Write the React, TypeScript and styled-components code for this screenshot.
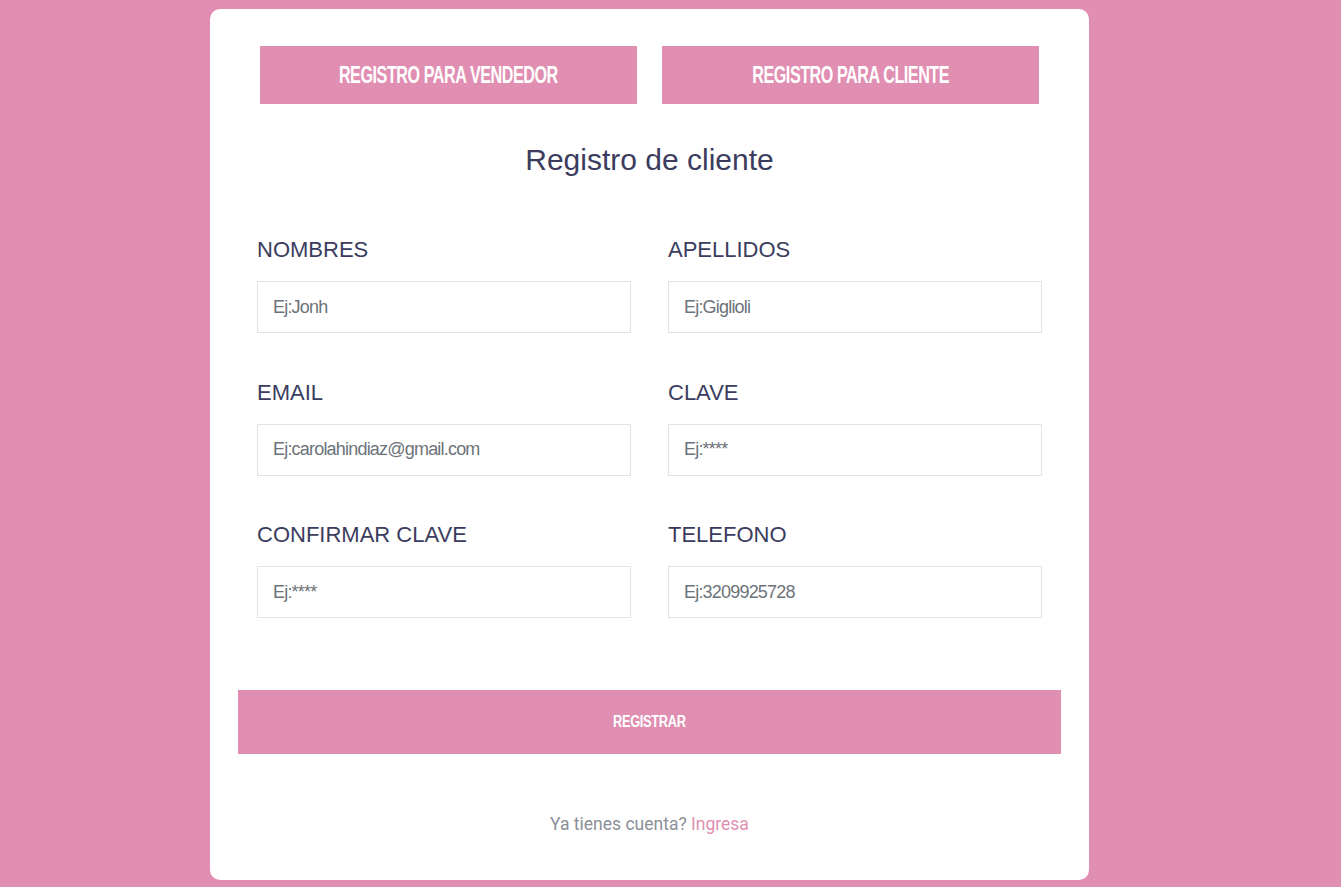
import styled, { createGlobalStyle } from "styled-components";

const pink = "#e08fb2";

const GlobalStyle = createGlobalStyle`
  html, body {
    margin: 0;
    padding: 0;
    background: ${pink};
  }
  * {
    box-sizing: border-box;
  }
`;

const fields = [
  { label: "NOMBRES", placeholder: "Ej:Jonh" },
  { label: "APELLIDOS", placeholder: "Ej:Giglioli" },
  { label: "EMAIL", placeholder: "Ej:carolahindiaz@gmail.com" },
  { label: "CLAVE", placeholder: "Ej:****" },
  { label: "CONFIRMAR CLAVE", placeholder: "Ej:****" },
  { label: "TELEFONO", placeholder: "Ej:3209925728" },
];

export default function App() {
  return (
    <>
      <GlobalStyle />
      <Page>
        <Card>
          <TabRow>
            <TabButton>
              <Condensed $scale={0.7}>REGISTRO PARA VENDEDOR</Condensed>
            </TabButton>
            <TabButton>
              <Condensed $scale={0.7}>REGISTRO PARA CLIENTE</Condensed>
            </TabButton>
          </TabRow>
          <Title>Registro de cliente</Title>
          <FormGrid>
            {fields.map(({ label, placeholder }) => (
              <Field key={label}>
                <Label>{label}</Label>
                <Input placeholder={placeholder} />
              </Field>
            ))}
          </FormGrid>
          <SubmitButton>
            <Condensed $scale={0.8}>REGISTRAR</Condensed>
          </SubmitButton>
          <Footer>
            Ya tienes cuenta? <FooterLink href="#">Ingresa</FooterLink>
          </Footer>
        </Card>
      </Page>
    </>
  );
}

const Page = styled.div`
  min-height: 887px;
  padding: 9px 0 7px 210px;
`;

const Card = styled.div`
  width: 879px;
  height: 871px;
  background: #fff;
  border-radius: 10px;
  display: flex;
  flex-direction: column;
  align-items: center;
  padding-top: 37px;
`;

const TabRow = styled.div`
  display: flex;
  gap: 25px;
`;

// the buttons use a tall, narrow display face: squeeze the sans to match
const Condensed = styled.span<{ $scale: number }>`
  display: inline-block;
  transform: scaleX(${(p) => p.$scale});
  white-space: nowrap;
`;

const TabButton = styled.button`
  width: 377px;
  height: 58px;
  padding: 0;
  border: none;
  background: ${pink};
  color: #fff;
  font-family: "Liberation Sans", Arial, sans-serif;
  font-weight: 700;
  font-size: 23px;
  letter-spacing: -0.6px;
  cursor: pointer;
`;

const Title = styled.h2`
  margin: 39px 0 0;
  font-family: "Liberation Sans", Arial, sans-serif;
  font-weight: 400;
  font-size: 30px;
  line-height: 34px;
  color: #3b3c5e;
`;

const FormGrid = styled.div`
  display: grid;
  grid-template-columns: 374px 374px;
  column-gap: 37px;
  row-gap: 46.5px;
  margin-top: 60px;
`;

const Field = styled.div`
  display: flex;
  flex-direction: column;
  gap: 18px;
`;

const Label = styled.label`
  font-family: "Liberation Sans", Arial, sans-serif;
  font-size: 22px;
  line-height: 26px;
  color: #3b3c5e;
`;

const Input = styled.input`
  height: 52px;
  border: 1px solid #e3e3e3;
  padding: 0 15px;
  font-family: "Liberation Sans", Arial, sans-serif;
  font-size: 18px;
  letter-spacing: -0.8px;
  color: #6c737a;
  outline: none;
  &::placeholder {
    color: #6c737a;
  }
`;

const SubmitButton = styled.button`
  width: 823px;
  height: 64px;
  margin-top: 72px;
  padding: 0;
  border: none;
  background: ${pink};
  color: #fff;
  font-family: "Liberation Sans", Arial, sans-serif;
  font-weight: 700;
  font-size: 16px;
  letter-spacing: -0.4px;
  cursor: pointer;
`;

const Footer = styled.p`
  margin: 58px 0 0;
  font-family: Roboto, "Liberation Sans", sans-serif;
  font-size: 17.5px;
  line-height: 24px;
  color: #8a8f98;
`;

const FooterLink = styled.a`
  color: ${pink};
  text-decoration: none;
`;
